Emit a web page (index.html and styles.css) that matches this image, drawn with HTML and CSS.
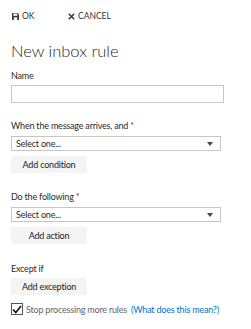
FILE: index.html
```html
<!DOCTYPE html>
<html lang="en">
<head>
    <meta charset="UTF-8">
    <title>New inbox rule</title>
    <link rel="stylesheet" href="styles.css">
</head>
<body>
    <div class="toolbar">
        <span class="tool tool-ok">
            <svg class="tool-icon" width="7" height="7" viewBox="0 0 7 7">
                <path d="M0 0H5.6L7 1.4V7H0Z" fill="#3c3c3c"/>
                <rect x="1.3" y="0.6" width="4" height="2.2" fill="#fff"/>
                <rect x="1.8" y="4.4" width="3.4" height="2.6" fill="#fff"/>
            </svg>
            OK
        </span>
        <span class="tool">
            <svg class="tool-icon" width="7" height="7" viewBox="0 0 7 7">
                <path d="M0.8 0.8L6.2 6.2M6.2 0.8L0.8 6.2" stroke="#3c3c3c" stroke-width="1.6"/>
            </svg>
            CANCEL
        </span>
    </div>

    <h1 class="title">New inbox rule</h1>

    <div class="field field-name">
        <div class="label">Name</div>
        <input class="text-input" type="text">
    </div>

    <div class="field field-when">
        <div class="label">When the message arrives, and <span class="req">*</span></div>
        <div class="select"><span>Select one...</span><span class="arrow"></span></div>
        <button class="add-btn">Add condition</button>
    </div>

    <div class="field field-do">
        <div class="label">Do the following <span class="req">*</span></div>
        <div class="select"><span>Select one...</span><span class="arrow"></span></div>
        <button class="add-btn">Add action</button>
    </div>

    <div class="field field-except">
        <div class="label">Except if</div>
        <button class="add-btn add-btn-tight">Add exception</button>
    </div>

    <div class="stop-row">
        <span class="checkbox">
            <svg width="10" height="9" viewBox="0 0 10 9">
                <path d="M1 4.5L3.8 7.5L9 1" fill="none" stroke="#111" stroke-width="1.6"/>
            </svg>
        </span>
        <span class="stop-text">Stop processing more rules</span>
        <a class="help-link" href="#">(What does this mean?)</a>
    </div>
</body>
</html>
```

FILE: styles.css
```css
body {
    margin: 0;
    padding: 0 11px;
    font-family: 'Lato', 'Open Sans', Arial, sans-serif;
    color: #2B2B2B;
    background: #FFFFFF;
}
.toolbar {
    display: flex;
    align-items: center;
    height: 12px;
    padding-top: 10px;
    padding-left: 1px;
    font-size: 8.5px;
    color: #333333;
}
.tool {
    display: flex;
    align-items: center;
    gap: 3px;
}
.tool-ok {
    width: 56px;
}
.tool-icon {
    display: block;
}
.title {
    margin: 17px 0 0;
    font-family: 'Lato', 'Open Sans', sans-serif;
    font-weight: 300;
    font-size: 16.5px;
    line-height: 24px;
    color: #1E1E1E;
}
.label {
    font-size: 9px;
    letter-spacing: -0.2px;
    line-height: 12px;
    margin-bottom: 4px;
    white-space: nowrap;
}
.req {
    color: #C00000;
}
.field-name {
    margin-top: 7px;
}
.field-name .label {
    margin-bottom: 3px;
}
.field-when {
    margin-top: 17px;
}
.field-do {
    margin-top: 18px;
}
.field-except {
    margin-top: 19px;
}
.field-except .label {
    margin-bottom: 3px;
}
.text-input {
    display: block;
    box-sizing: border-box;
    width: 213px;
    height: 18px;
    margin: 0;
    border: 1px solid #C6C6C6;
    padding: 0 4px;
}
.select {
    display: flex;
    align-items: center;
    justify-content: space-between;
    box-sizing: border-box;
    width: 210px;
    height: 15px;
    border: 1px solid #C6C6C6;
    padding: 0 7px 0 4px;
    font-size: 9px;
    letter-spacing: -0.2px;
    color: #2B2B2B;
}
.arrow {
    width: 0;
    height: 0;
    border-left: 3px solid transparent;
    border-right: 3px solid transparent;
    border-top: 4px solid #444444;
}
.add-btn {
    display: block;
    width: 76px;
    height: 17px;
    margin-top: 5px;
    padding: 0;
    border: none;
    background: #F4F4F4;
    font-family: 'Lato', 'Open Sans', Arial, sans-serif;
    font-size: 9px;
    letter-spacing: -0.2px;
    color: #222222;
}
.add-btn-tight {
    margin-top: 0;
}
.stop-row {
    display: flex;
    align-items: center;
    margin-top: 8px;
    font-size: 9px;
    letter-spacing: -0.2px;
    white-space: nowrap;
}
.checkbox {
    display: flex;
    align-items: center;
    justify-content: center;
    box-sizing: border-box;
    width: 12px;
    height: 12px;
    border: 1px solid #555555;
    margin-right: 3px;
}
.stop-text {
    color: #666666;
    margin-right: 4px;
}
.help-link {
    color: #0072C6;
    text-decoration: none;
}
```
